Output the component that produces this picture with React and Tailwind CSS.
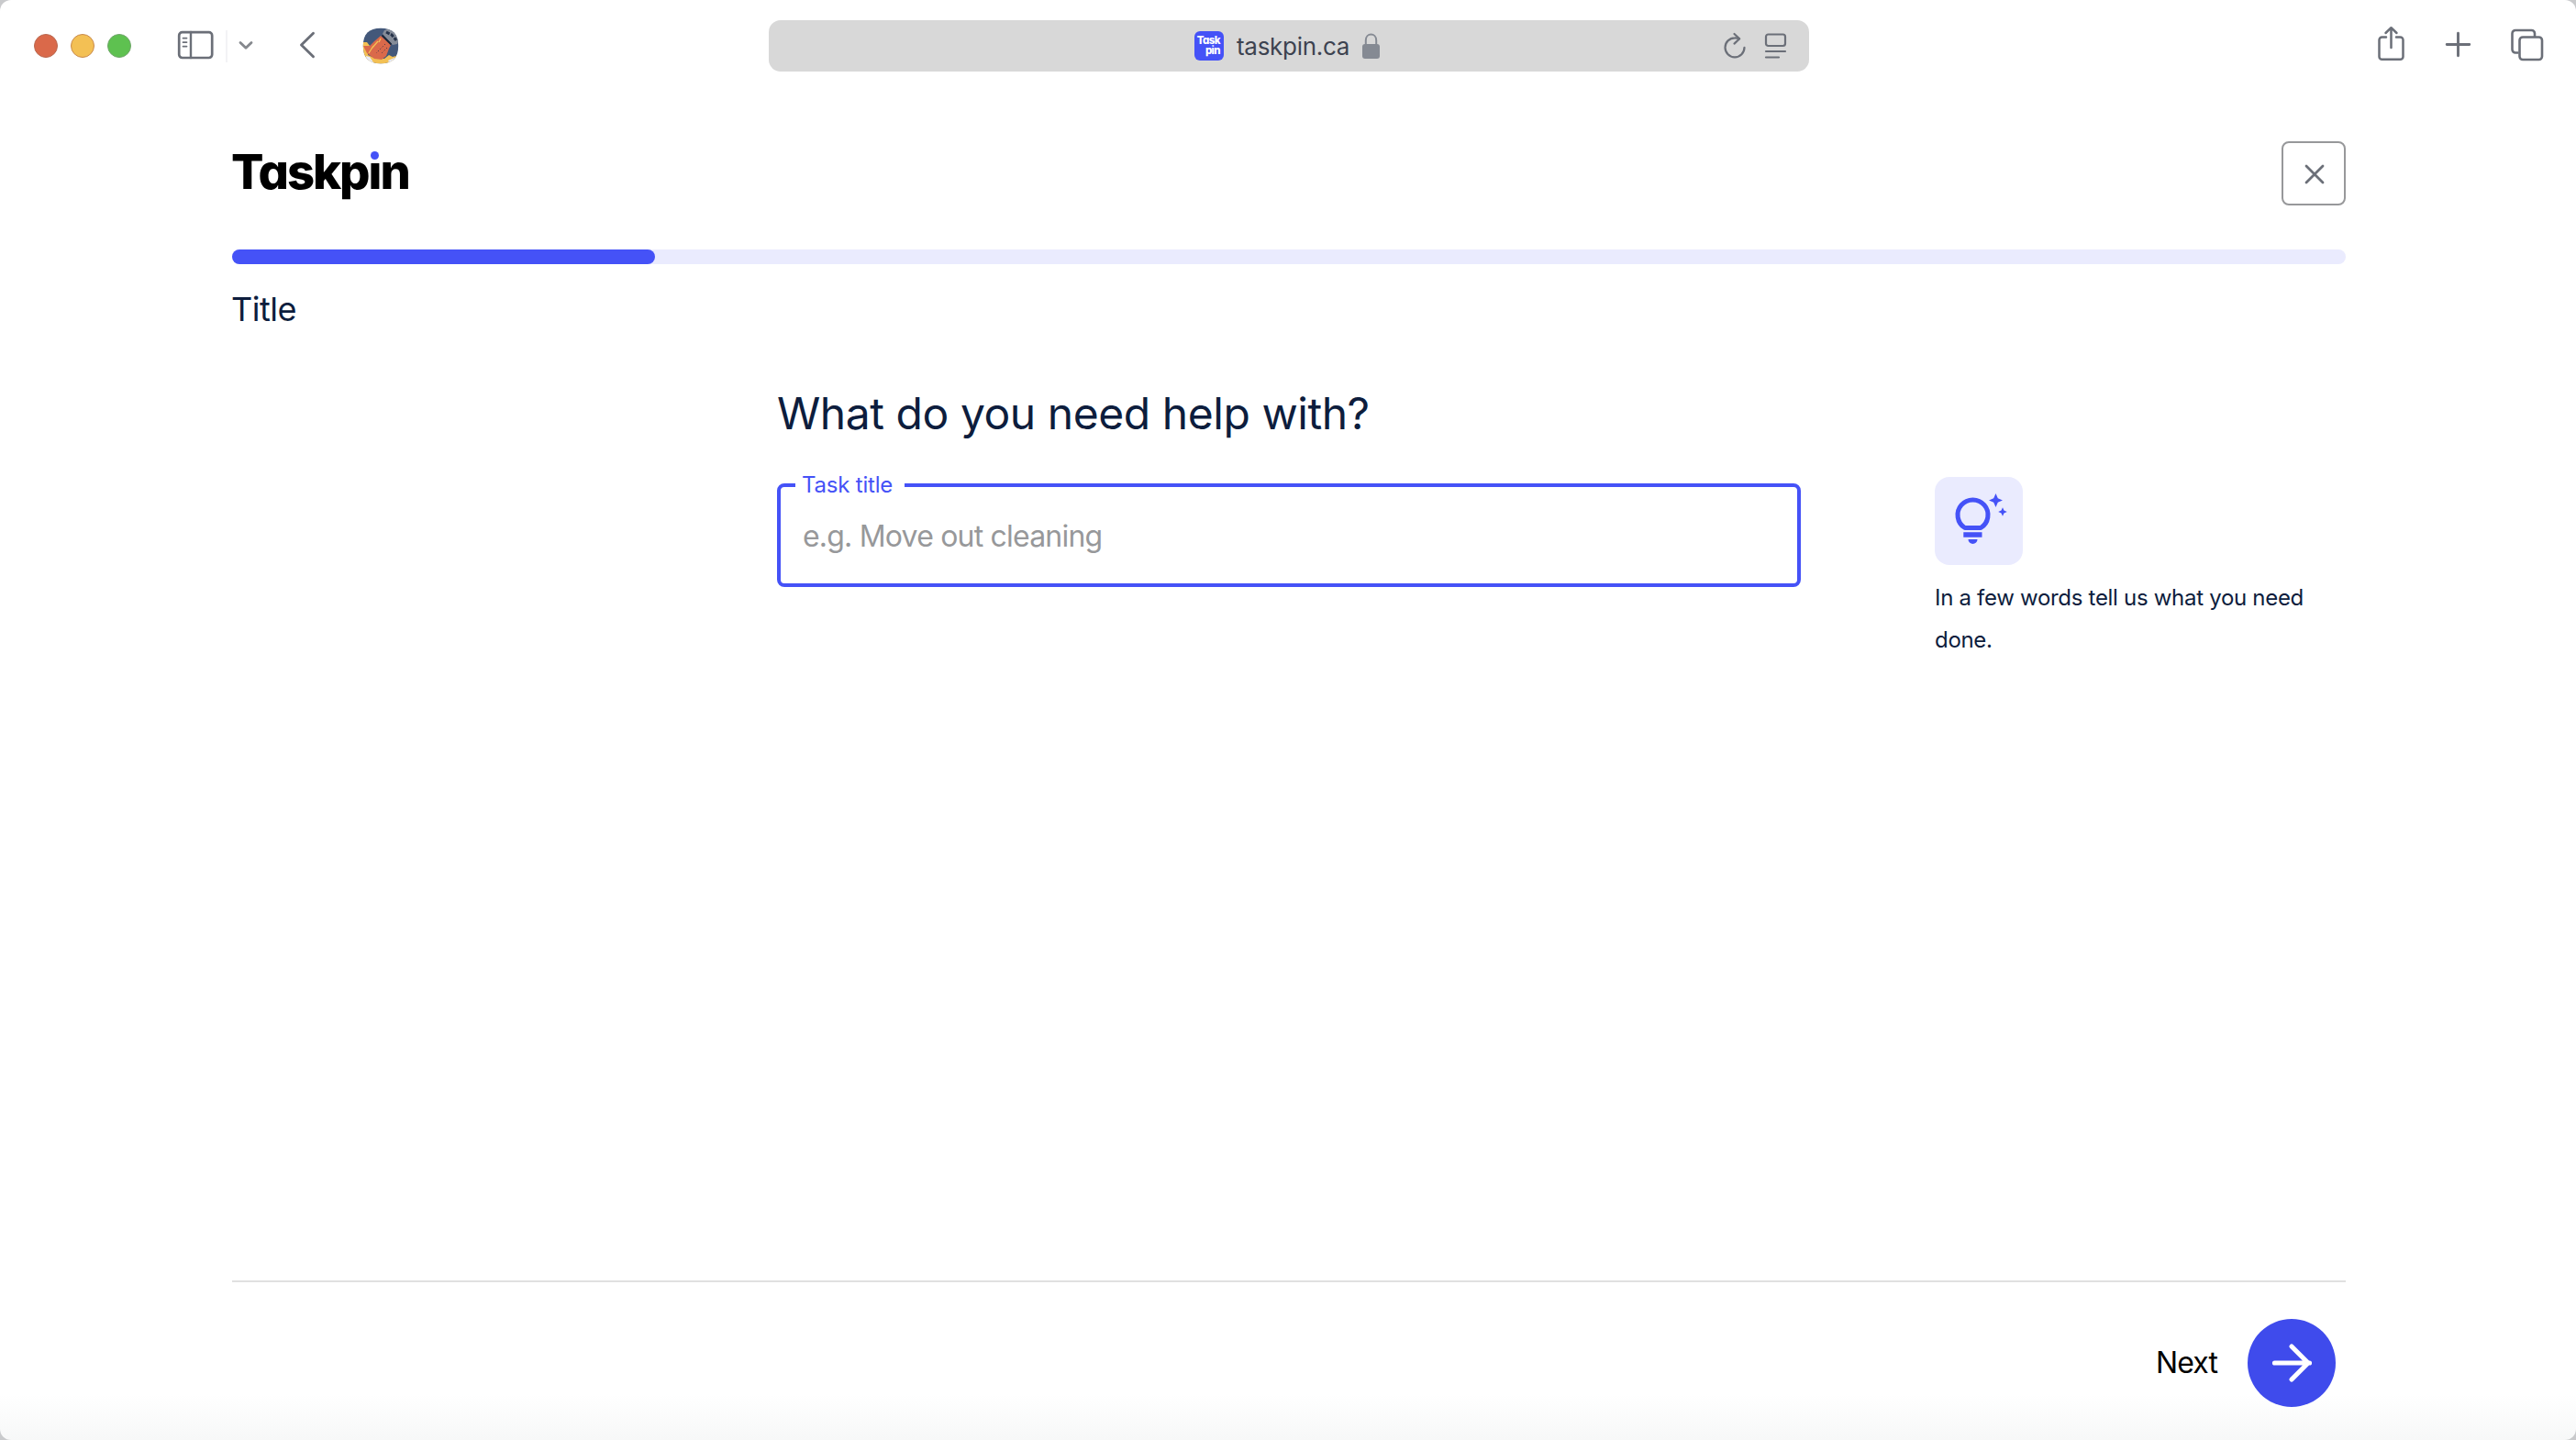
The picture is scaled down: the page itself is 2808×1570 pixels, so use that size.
import React from "react";

const gray = "#6b6f78";

function SidebarIcon() {
  return (
    <svg width="40" height="32" viewBox="0 0 40 32" fill="none" stroke={gray} strokeLinecap="round">
      <rect x="2.2" y="2.2" width="36" height="27.8" rx="3.5" strokeWidth="2.7" />
      <path d="M15 2v28" strokeWidth="2.4" />
      <path d="M6.5 8.6h4M6.5 13.1h4M6.5 17.6h4" strokeWidth="1.8" />
    </svg>
  );
}

function SiteAvatar() {
  return (
    <svg width="40" height="40" viewBox="0 0 40 40">
      <defs>
        <clipPath id="avatar"><path d="M20 .8C33 .8 39.2 7 39.2 20S33 39.2 20 39.2.8 33 .8 20 7 .8 20 .8z" /></clipPath>
      </defs>
      <g clipPath="url(#avatar)">
        <rect width="40" height="40" fill="#43587a" />
        <path d="M0 16l5 0 3 4-2 10 9 4 9 0 5-4 4 2 7-2v10H0z" fill="#f3c054" />
        <path d="M4 31l4 1 4 6H5zM28 36l7-3 5 0v5l-10 2z" fill="#e8ebf8" />
        <path d="M20 9l11 10-2 4-3 8-5 4-8-1-8-6-4-8 7 0 5-5z" fill="#da694a" />
        <path d="M12 20l-5 8M17 15l-7 8M20 12l-2 4" stroke="#f3c054" strokeWidth="1.300" />
        <path d="M25 18l-10 10M27 22l-6 6" stroke="#43344a" strokeWidth="1" strokeDasharray="1.200 2.200" />
        <path d="M22 7l2-4 6-2 7 4 3 8-2 5-5 1z" fill="#858c98" />
        <path d="M26 5l6 3 5 6" stroke="#26334a" strokeWidth="3" fill="none" strokeDasharray="4 1.500" />
        <path d="M21.500 8.500l10 10" stroke="#1d2536" strokeWidth="1.800" />
      </g>
    </svg>
  );
}

function BulbIcon() {
  return (
    <svg width="96" height="96" viewBox="0 0 96 96" fill="#4552f7">
      <path d="M32.800 55.500A16.500 16.500 0 1 1 50.200 55.500z" fill="none" stroke="#4552f7" strokeWidth="5" strokeLinejoin="round" />
      <path d="M31.300 60.300h20.200v5.500h-20.200zM36.500 68h10a5 5 0 0 1-10 0z" />
      <path d="M66.500 18l2.300 5.200 5.200 2.300-5.200 2.300-2.300 5.200-2.300-5.200-5.200-2.300 5.200-2.300zM74 33.300l1.500 3.200 3.300 1.500-3.300 1.500L74 42.700l-1.500-3.200-3.300-1.500 3.300-1.500z" />
    </svg>
  );
}

function Logo() {
  return (
    <div className="mt-px -ml-px h-[64px] text-[52.500px] leading-[64px] font-extrabold tracking-[-2px] whitespace-nowrap text-black [font-feature-settings:'cv11']">
      Taskp
      <span className="relative inline-block">
        i
        <span className="absolute top-[9px] left-0 flex h-[14px] w-[13px] items-start justify-center bg-white">
          <span className="mt-px size-[9px] shrink-0 rounded-full bg-[#4552f7]" />
        </span>
      </span>
      n
    </div>
  );
}

function BrowserBar() {
  return (
    <header className="flex h-[100px] items-start">
      <div className="flex w-[838px] shrink-0 pl-[37px]">
        <div className="mt-[37px] flex gap-[14px]">
          <span className="size-[26px] rounded-full border border-[#b9684f] bg-[#da694a]" />
          <span className="size-[26px] rounded-full border border-[#c98a4c] bg-[#f3c054]" />
          <span className="size-[26px] rounded-full border border-[#6fa569] bg-[#5ec150]" />
        </div>
        <div className="mt-[33px] ml-[50px]"><SidebarIcon /></div>
        <div className="mt-[33px] ml-[13px] h-[35px] w-[2px] bg-[#f3f3f5]" />
        <svg className="mt-[43px] ml-[11px]" width="18" height="12" viewBox="0 0 18 12" fill="none" stroke="#85888d" strokeWidth="2.8" strokeLinecap="round" strokeLinejoin="round">
          <path d="M3 3.500l6 5.800 6-5.800" />
        </svg>
        <svg className="mt-[33px] ml-[48px]" width="20" height="32" viewBox="0 0 20 32" fill="none" stroke={gray} strokeWidth="2.9" strokeLinecap="round" strokeLinejoin="round">
          <path d="M16.500 3.300L3.500 16l13 12.700" />
        </svg>
        <div className="mt-[30px] ml-[50px]"><SiteAvatar /></div>
      </div>
      <div className="mt-[22px] flex h-14 w-[1134px] shrink-0 items-center rounded-[13px] bg-[#d8d8d8]">
        <div className="ml-[464px] flex size-8 flex-col justify-center rounded-md bg-[#4552f7] pr-1 text-right text-[11.500px] leading-[11px] font-extrabold tracking-[-0.600px] text-white [font-feature-settings:'cv11']">
          <span>Task</span>
          <span>pin</span>
        </div>
        <span className="mt-[2px] ml-[14px] w-[124px] font-['Inter'] text-[26px] leading-8 tracking-[-0.300px] whitespace-nowrap text-[#3d4350]">taskpin.ca</span>
        <svg className="ml-[12px]" width="21" height="28" viewBox="0 0 21 28" fill="#858a93">
          <path d="M4.800 13V8c0-8.600 11.400-8.600 11.400 0v5" fill="none" stroke="#858a93" strokeWidth="2" />
          <rect x="1" y="12" width="19" height="16" rx="3" />
        </svg>
        <svg className="ml-[372px]" width="28" height="30" viewBox="0 0 28 30" fill="none" stroke={gray} strokeWidth="2.200" strokeLinecap="round" strokeLinejoin="round">
          <path d="M24.500 16.800A10.500 10.500 0 1 1 14 6.300q2.700-.1 5 .9" />
          <path d="M13.500 2l5.700 5.300-5.700 5.300" />
        </svg>
        <svg className="ml-[18px]" width="26" height="30" viewBox="0 0 26 30" fill="none" stroke={gray} strokeWidth="2.200" strokeLinecap="round">
          <rect x="2" y="2.500" width="21" height="12.500" rx="2.500" />
          <path d="M2 21h21M2 27.500h14" />
        </svg>
      </div>
      <div className="flex">
        <svg className="mt-[27px] ml-[618px]" width="34" height="42" viewBox="0 0 34 42" fill="none" stroke={gray} strokeWidth="2.500" strokeLinecap="round" strokeLinejoin="round">
          <path d="M11 13.500H6.500a3 3 0 0 0-3 3v18.300a3 3 0 0 0 3 3h20a3 3 0 0 0 3-3V16.500a3 3 0 0 0-3-3H22" />
          <path d="M16.500 25V3.500M10.500 9l6-5.800 6 5.800" />
        </svg>
        <svg className="mt-[33px] ml-[40px]" width="30" height="30" viewBox="0 0 30 30" fill="none" stroke={gray} strokeWidth="2.900" strokeLinecap="round">
          <path d="M15.500 3.200v24.600M3.200 15.500h24.600" />
        </svg>
        <svg className="mt-[30px] ml-[41px]" width="40" height="38" viewBox="0 0 40 38" fill="none" stroke={gray} strokeWidth="2.600">
          <path d="M10.500 27.500H7a3.500 3.500 0 0 1-3.500-3.500V6.500A3.500 3.500 0 0 1 7 3h17.500A3.500 3.500 0 0 1 28 6.500V10" />
          <rect x="11.500" y="10.500" width="24.500" height="24.500" rx="3.500" />
        </svg>
      </div>
    </header>
  );
}

export default function App() {
  return (
    <div className="h-[1570px] w-[2808px] overflow-hidden bg-[#c9cacc]">
      <div className="flex h-full flex-col overflow-hidden rounded-[12px] bg-white bg-[linear-gradient(to_bottom,transparent_1520px,#f7f8f8_1570px)] font-['Inter',sans-serif] text-[#0d1d3d]">
        <BrowserBar />
        <main className="ml-[253px] flex w-[2304px] grow flex-col">
          <div className="mt-[54px] flex h-[70px] justify-between">
            <Logo />
            <button className="flex size-[70px] items-center justify-center rounded-lg border-2 border-[#97989a]">
              <svg className="ml-[2px]" width="26" height="26" viewBox="0 0 26 26" stroke={gray} strokeWidth="2.800" strokeLinecap="round">
                <path d="M4 5l18 18M22 5l-18 18" />
              </svg>
            </button>
          </div>
          <div className="mt-12 h-4 rounded-full bg-[#eaebfe]">
            <div className="h-full w-1/5 rounded-full bg-[#4552f7]" />
          </div>
          <p className="mt-[25px] -ml-px text-[36px] leading-[48px] tracking-[-0.500px]">Title</p>
          <div className="mt-[56px] flex items-start">
            <section className="ml-[594px] w-[1116px]">
              <h1 className="text-[48px] leading-[68px] tracking-[-0.450px] whitespace-nowrap">What do you need help with?</h1>
              <fieldset className="mt-[29px] h-[126px] rounded-lg border-4 border-[#4552f7] pl-[24px]">
                <legend className="-ml-[8px] h-[30px] w-[119px] pl-[7px] text-[24px] leading-[30px] tracking-[-0.200px] whitespace-nowrap text-[#4552f7]">Task title</legend>
                <p className="mt-[21px] text-[32px] leading-10 tracking-[-0.800px] text-[#97989a]">e.g. Move out cleaning</p>
              </fieldset>
            </section>
            <aside className="mt-[103px] ml-[146px] w-[440px]">
              <div className="size-24 rounded-2xl bg-[#eaebfe]"><BulbIcon /></div>
              <p className="mt-[13px] text-[24px] leading-[46px] tracking-[-0.300px] whitespace-nowrap">In a few words tell us what you need<br />done.</p>
            </aside>
          </div>
          <footer className="mt-auto flex h-[174px] items-start justify-end border-t-2 border-[#e0e0e0] pt-10 pr-[11px]">
            <span className="mr-[33px] text-[32px] leading-[96px] tracking-[-0.900px] text-black">Next</span>
            <button className="flex size-24 items-center justify-center rounded-full bg-[#3f4bec]">
              <svg width="48" height="48" viewBox="0 0 48 48" fill="none" stroke="white" strokeWidth="5.200" strokeLinecap="round" strokeLinejoin="round">
                <path d="M5.500 24h38M24 6l18 18-18 18" />
              </svg>
            </button>
          </footer>
        </main>
      </div>
    </div>
  );
}
